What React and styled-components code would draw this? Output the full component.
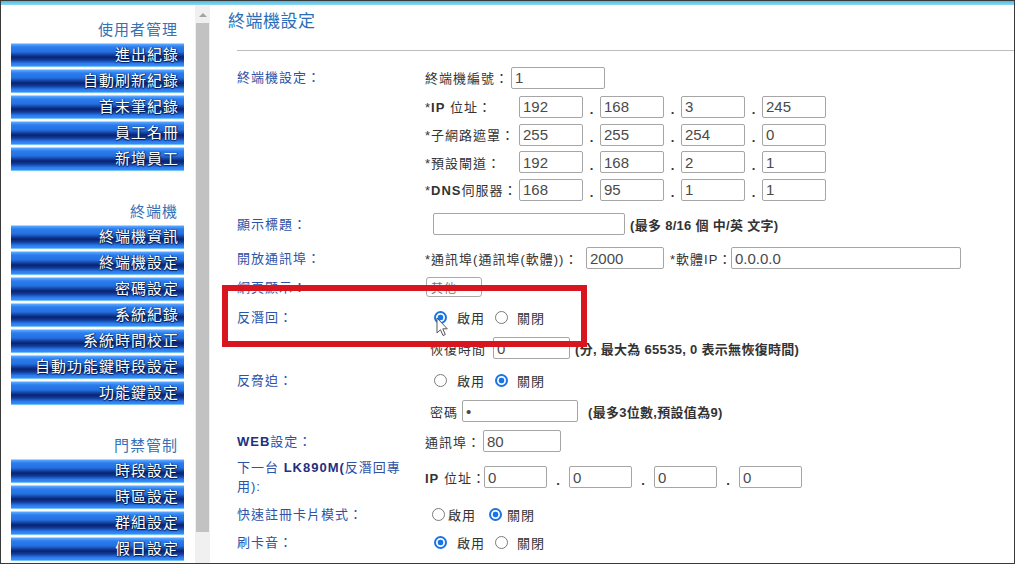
import styled, { createGlobalStyle } from 'styled-components';

const GlobalStyle = createGlobalStyle`
  html, body {
    margin: 0;
    padding: 0;
    background: #fff;
  }
  body {
    font-family: "Liberation Sans", "Noto Sans CJK TC", sans-serif;
  }
`;

const Frame = styled.div`
  position: relative;
  width: 1015px;
  height: 564px;
  box-sizing: border-box;
  border: 1px solid #3a3a3a;
  background: #fff;
  display: flex;
  flex-direction: column;
  overflow: hidden;
`;

const TopStrip = styled.div`
  flex: none;
  height: 4px;
  background: linear-gradient(#4cbbe4, #8fd8f2);
`;

const Body = styled.div`
  flex: 1;
  display: flex;
  min-height: 0;
`;

// left menu
const Sidebar = styled.div`
  flex: none;
  width: 194px;
  box-sizing: border-box;
  padding: 16px 0 0 10px;
  display: flex;
  flex-direction: column;
  gap: 32px;
`;

const Section = styled.div`
  display: flex;
  flex-direction: column;
`;

const SectionTitle = styled.div`
  width: 173px;
  box-sizing: border-box;
  padding-right: 6px;
  margin-bottom: 4px;
  text-align: right;
  font-size: 15px;
  line-height: 18px;
  letter-spacing: 1px;
  color: #3571b6;
`;

const ButtonList = styled.div`
  display: flex;
  flex-direction: column;
  gap: 2px;
`;

const NavButton = styled.div`
  width: 173px;
  height: 24px;
  box-sizing: border-box;
  padding-right: 5px;
  border-top: 1px solid #9fdcff;
  border-bottom: 1px solid #6fc2ff;
  background: linear-gradient(
    to bottom,
    #5aa8ff 0%,
    #2b7cee 14%,
    #2470e0 36%,
    #133f9e 50%,
    #0a2370 60%,
    #123d9a 73%,
    #2a7af0 88%,
    #3a8cf8 100%
  );
  text-align: right;
  font-size: 15px;
  line-height: 22px;
  letter-spacing: 1px;
  color: #fff;
  text-shadow: 0 1px 1px #001a4d, 1px 0 1px #001a4d;
`;

const Scrollbar = styled.div`
  flex: none;
  width: 15px;
  background: #f0f0f0;
  display: flex;
  flex-direction: column;
  align-items: center;
`;

const ScrollArrow = styled.div`
  margin-top: 8px;
  width: 0;
  height: 0;
  border-left: 4px solid transparent;
  border-right: 4px solid transparent;
  border-bottom: 4px solid #a3a3a3;
`;

const ScrollThumb = styled.div`
  margin-top: 6px;
  width: 13px;
  height: 509px;
  background: #c2c2c2;
`;

// main form
const Content = styled.div`
  flex: 1;
  padding-top: 7px;
  min-width: 0;
`;

const PageTitle = styled.div`
  padding-left: 18px;
  font-size: 17px;
  line-height: 20px;
  letter-spacing: 0.5px;
  color: #2c6db8;
`;

const Rule = styled.div`
  margin: 18px 0 0 27px;
  height: 1px;
  background: #bdbdbd;
`;

const Form = styled.div`
  margin-top: 12px;
  padding-left: 27px;
  display: flex;
  flex-direction: column;
`;

const Row = styled.div`
  height: ${(p) => p.$h}px;
  display: flex;
  align-items: center;
`;

const Label = styled.div`
  flex: none;
  width: 188px;
  box-sizing: border-box;
  padding-right: 14px;
  font-size: 13px;
  line-height: 19px;
  letter-spacing: 1px;
  color: #2d52a8;
`;

const Strong = styled.b`
  color: #22307f;
`;

const Value = styled.div`
  display: flex;
  align-items: center;
  font-size: 13px;
  letter-spacing: 1px;
  color: #333;
  white-space: nowrap;
`;

const SubLabel = styled.span`
  flex: none;
  width: ${(p) => p.$w}px;
  margin-left: ${(p) => p.$ml || 0}px;
`;

const TextInput = styled.input`
  flex: none;
  width: ${(p) => p.$w}px;
  height: 22px;
  margin: 0 0 0 ${(p) => p.$ml || 0}px;
  box-sizing: border-box;
  padding: 0 3px;
  border: 1px solid #a6a6a6;
  border-radius: 2px;
  background: #fff;
  font-family: "Liberation Sans", sans-serif;
  font-size: 15px;
  color: #4a4a4a;
  outline: none;
`;

const Dot = styled.span`
  flex: none;
  width: ${(p) => p.$w}px;
  padding-top: 6px;
  text-align: center;
  font-weight: bold;
  letter-spacing: 0;
`;

const Note = styled.span`
  margin-left: ${(p) => p.$ml || 0}px;
  font-weight: bold;
  letter-spacing: 0.3px;
  color: #333;
`;

const SelectBox = styled.div`
  margin-left: 1px;
  width: 56px;
  height: 20px;
  box-sizing: border-box;
  padding: 0 4px;
  border: 1px solid #aaa;
  border-radius: 3px;
  display: flex;
  align-items: center;
  justify-content: space-between;
  color: #777;
  font-size: 12px;
`;

const Radio = styled.span`
  flex: none;
  width: 13px;
  height: 13px;
  box-sizing: border-box;
  margin-left: ${(p) => p.$ml}px;
  border-radius: 50%;
  border: ${(p) => (p.$on ? '2px solid #1b74e4' : '1px solid #7a7a7a')};
  background: ${(p) =>
    p.$on ? 'radial-gradient(circle, #1b74e4 0 2.6px, #fff 3.2px)' : '#fff'};
`;

const RadioText = styled.span`
  margin-left: ${(p) => p.$ml}px;
`;

const Highlight = styled.div`
  position: absolute;
  left: 221px;
  top: 284px;
  width: 365px;
  height: 62px;
  box-sizing: border-box;
  border: 6px solid #d8161f;
  pointer-events: none;
`;

const Cursor = styled.svg`
  position: absolute;
  left: 435px;
  top: 316px;
  pointer-events: none;
`;

const menu = [
  { title: '使用者管理', items: ['進出紀錄', '自動刷新紀錄', '首末筆紀錄', '員工名冊', '新增員工'] },
  {
    title: '終端機',
    items: ['終端機資訊', '終端機設定', '密碼設定', '系統紀錄', '系統時間校正', '自動功能鍵時段設定', '功能鍵設定'],
  },
  { title: '門禁管制', items: ['時段設定', '時區設定', '群組設定', '假日設定'] },
];

function IpInputs({ values, w, dot }) {
  return values.map((v, i) => (
    <span key={i} style={{ display: 'contents' }}>
      {i > 0 && <Dot $w={dot}>.</Dot>}
      <TextInput $w={w} defaultValue={v} readOnly />
    </span>
  ));
}

function Toggle({ on, tight }) {
  const g = tight ? [7, 3, 13, 5] : [9, 10, 10, 9];
  return (
    <>
      <Radio $ml={g[0]} $on={on} />
      <RadioText $ml={g[1]}>啟用</RadioText>
      <Radio $ml={g[2]} $on={!on} />
      <RadioText $ml={g[3]}>關閉</RadioText>
    </>
  );
}

const ipRows = [
  { label: <>*<b>IP</b> 位址：</>, values: ['192', '168', '3', '245'] },
  { label: '*子網路遮罩：', values: ['255', '255', '254', '0'] },
  { label: '*預設閘道：', values: ['192', '168', '2', '1'] },
  { label: <>*<b>DNS</b>伺服器：</>, values: ['168', '95', '1', '1'] },
];
const ipHeights = [29, 27, 28, 27];

export default function App() {
  return (
    <>
      <GlobalStyle />
      <Frame>
        <TopStrip />
        <Body>
          <Sidebar>
            {menu.map((s) => (
              <Section key={s.title}>
                <SectionTitle>{s.title}</SectionTitle>
                <ButtonList>
                  {s.items.map((it) => (
                    <NavButton key={it}>{it}</NavButton>
                  ))}
                </ButtonList>
              </Section>
            ))}
          </Sidebar>
          <Scrollbar>
            <ScrollArrow />
            <ScrollThumb />
          </Scrollbar>
          <Content>
            <PageTitle>終端機設定</PageTitle>
            <Rule />
            <Form>
              <Row $h={29}>
                <Label>終端機設定：</Label>
                <Value>
                  <SubLabel $w={86}>終端機編號：</SubLabel>
                  <TextInput $w={94} defaultValue="1" readOnly />
                </Value>
              </Row>
              {ipRows.map((r, i) => (
                <Row key={i} $h={ipHeights[i]}>
                  <Label />
                  <Value>
                    <SubLabel $w={94}>{r.label}</SubLabel>
                    <IpInputs values={r.values} w={64} dot={17} />
                  </Value>
                </Row>
              ))}
              <Row $h={42}>
                <Label>顯示標題：</Label>
                <Value>
                  <TextInput $w={192} $ml={8} defaultValue="" readOnly />
                  <Note $ml={5}>(最多 8/16 個 中/英 文字)</Note>
                </Value>
              </Row>
              <Row $h={26}>
                <Label>開放通訊埠：</Label>
                <Value>
                  <SubLabel $w={161}>*通訊埠(通訊埠(軟體))：</SubLabel>
                  <TextInput $w={78} defaultValue="2000" readOnly />
                  <SubLabel $w={61} $ml={6}>*軟體IP：</SubLabel>
                  <TextInput $w={230} defaultValue="0.0.0.0" readOnly />
                </Value>
              </Row>
              <Row $h={32}>
                <Label>網頁顯示：</Label>
                <Value>
                  <SelectBox>
                    <span>其他</span>
                    <span>⌄</span>
                  </SelectBox>
                </Value>
              </Row>
              <Row $h={28}>
                <Label>反潛回：</Label>
                <Value>
                  <Toggle on />
                </Value>
              </Row>
              <Row $h={34}>
                <Label />
                <Value>
                  <SubLabel $w={63} $ml={5}>恢復時間</SubLabel>
                  <TextInput $w={77} defaultValue="0" readOnly />
                  <Note $ml={5}>(分, 最大為 65535, 0 表示無恢復時間)</Note>
                </Value>
              </Row>
              <Row $h={30}>
                <Label>反脅迫：</Label>
                <Value>
                  <Toggle on={false} />
                </Value>
              </Row>
              <Row $h={32}>
                <Label />
                <Value>
                  <SubLabel $w={32} $ml={5}>密碼</SubLabel>
                  <TextInput $w={116} defaultValue="•" readOnly />
                  <Note $ml={10}>(最多3位數,預設值為9)</Note>
                </Value>
              </Row>
              <Row $h={28}>
                <Label>
                  <Strong>WEB</Strong>設定：
                </Label>
                <Value>
                  <SubLabel $w={58}>通訊埠：</SubLabel>
                  <TextInput $w={78} defaultValue="80" readOnly />
                </Value>
              </Row>
              <Row $h={44}>
                <Label>
                  下一台 <Strong>LK890M(</Strong>反潛回專用):
                </Label>
                <Value>
                  <SubLabel $w={59}>
                    <b>IP</b> 位址：
                  </SubLabel>
                  <IpInputs values={['0', '0', '0', '0']} w={63} dot={22} />
                </Value>
              </Row>
              <Row $h={30}>
                <Label>快速註冊卡片模式：</Label>
                <Value>
                  <Toggle on={false} tight />
                </Value>
              </Row>
              <Row $h={26}>
                <Label>刷卡音：</Label>
                <Value>
                  <Toggle on />
                </Value>
              </Row>
            </Form>
          </Content>
        </Body>
        <Highlight />
        <Cursor width="13" height="20" viewBox="0 0 13 20">
          <path
            d="M1 1 L1 16 L4.5 12.7 L7 18.5 L9.3 17.5 L6.8 11.8 L11.3 11.8 Z"
            fill="#fff"
            stroke="#555"
            strokeWidth="1"
            strokeLinejoin="round"
          />
        </Cursor>
      </Frame>
    </>
  );
}
